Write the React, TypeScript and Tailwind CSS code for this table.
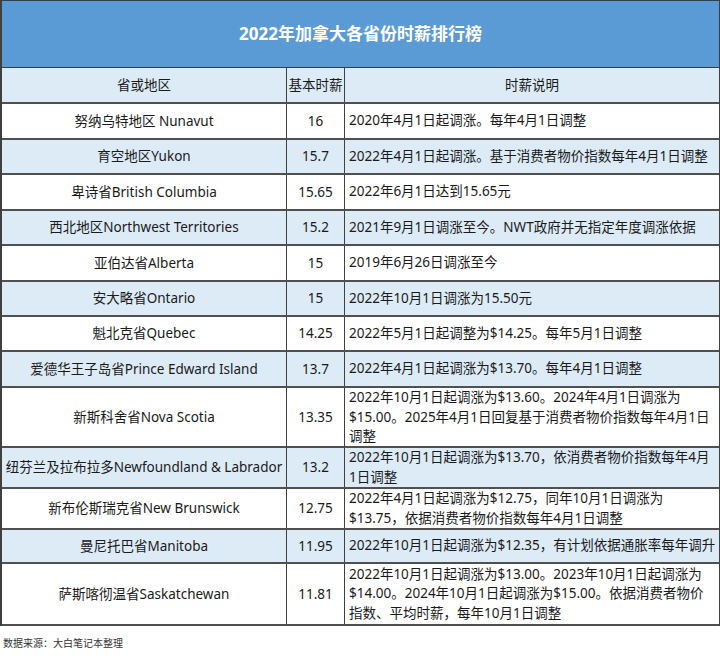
import React from "react";

type Row = { name: string; wage: string; notes: string[]; h: number };

const rows: Row[] = [
  { name: "努纳乌特地区 Nunavut", wage: "16", notes: ["2020年4月1日起调涨。每年4月1日调整"], h: 36 },
  { name: "育空地区Yukon", wage: "15.7", notes: ["2022年4月1日起调涨。基于消费者物价指数每年4月1日调整"], h: 35 },
  { name: "卑诗省British Columbia", wage: "15.65", notes: ["2022年6月1日达到15.65元"], h: 36 },
  { name: "西北地区Northwest Territories", wage: "15.2", notes: ["2021年9月1日调涨至今。NWT政府并无指定年度调涨依据"], h: 35 },
  { name: "亚伯达省Alberta", wage: "15", notes: ["2019年6月26日调涨至今"], h: 36 },
  { name: "安大略省Ontario", wage: "15", notes: ["2022年10月1日调涨为15.50元"], h: 35 },
  { name: "魁北克省Quebec", wage: "14.25", notes: ["2022年5月1日起调整为$14.25。每年5月1日调整"], h: 35 },
  { name: "爱德华王子岛省Prince Edward Island", wage: "13.7", notes: ["2022年4月1日起调涨为$13.70。每年4月1日调整"], h: 36 },
  {
    name: "新斯科舍省Nova Scotia",
    wage: "13.35",
    notes: [
      "2022年10月1日起调涨为$13.60。2024年4月1日调涨为",
      "$15.00。2025年4月1日回复基于消费者物价指数每年4月1日",
      "调整",
    ],
    h: 60,
  },
  {
    name: "纽芬兰及拉布拉多Newfoundland & Labrador",
    wage: "13.2",
    notes: ["2022年10月1日起调涨为$13.70，依消费者物价指数每年4月", "1日调整"],
    h: 41,
  },
  {
    name: "新布伦斯瑞克省New Brunswick",
    wage: "12.75",
    notes: ["2022年4月1日起调涨为$12.75，同年10月1日调涨为", "$13.75，依据消费者物价指数每年4月1日调整"],
    h: 41,
  },
  { name: "曼尼托巴省Manitoba", wage: "11.95", notes: ["2022年10月1日起调涨为$12.35，有计划依据通胀率每年调升"], h: 34 },
  {
    name: "萨斯喀彻温省Saskatchewan",
    wage: "11.81",
    notes: [
      "2022年10月1日起调涨为$13.00。2023年10月1日起调涨为",
      "$14.00。2024年10月1日起调涨为$15.00。依据消费者物价",
      "指数、平均时薪，每年10月1日调整",
    ],
    h: 62,
  },
];

export default function App() {
  return (
    <div
      className="w-[720px] h-[661px] bg-white text-[#1a1a1a]"
      style={{ fontFamily: '"Noto Sans", "Noto Sans CJK SC", sans-serif' }}
    >
      <div className="border-l-2 border-r border-[#404040]">
        <div className="h-[68px] bg-[#5b9bd5] border-t border-b border-[#2f4050] flex items-center justify-center text-white font-bold text-[17px]">
          2022年加拿大各省份时薪排行榜
        </div>

        <div className="grid grid-cols-[285px_58px_1fr] h-[36px] bg-[#ddebf7] border-b-2 border-[#505050] text-[13.5px]">
          <div className="flex items-center justify-center border-r border-[#404040]">省或地区</div>
          <div className="flex items-center justify-center border-r border-[#404040] whitespace-nowrap">基本时薪</div>
          <div className="flex items-center justify-center">时薪说明</div>
        </div>

        {rows.map((r, i) => (
          <div
            key={r.name}
            className={`grid grid-cols-[285px_58px_1fr] border-b-2 border-[#505050] text-[13.5px] ${
              i % 2 === 1 ? "bg-[#ddebf7]" : "bg-white"
            }`}
            style={{ height: r.h }}
          >
            <div className="flex items-center justify-center border-r border-[#404040] whitespace-nowrap">{r.name}</div>
            <div className="flex items-center justify-center border-r border-[#404040]">{r.wage}</div>
            <div className="flex flex-col justify-center pl-[4px] leading-[19.5px] whitespace-nowrap">
              {r.notes.map((n) => (
                <div key={n}>{n}</div>
              ))}
            </div>
          </div>
        ))}
      </div>

      <div className="pt-[10px] pl-[3px] text-[10px] text-[#333]">数据来源：大白笔记本整理</div>
    </div>
  );
}
